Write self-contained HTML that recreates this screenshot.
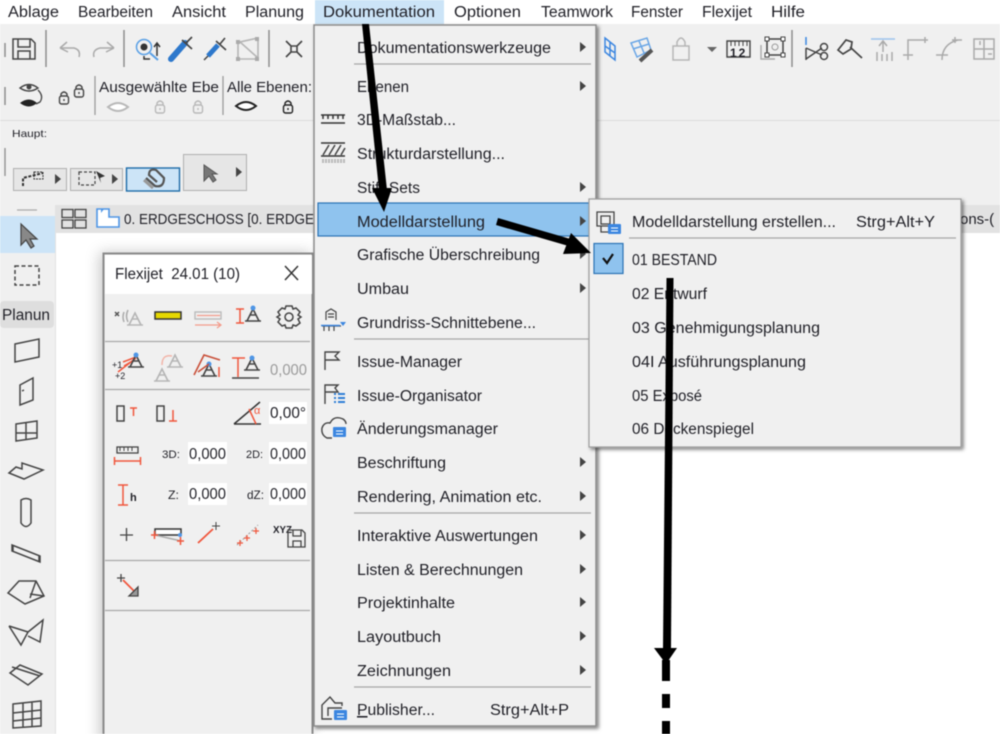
<!DOCTYPE html>
<html><head><meta charset="utf-8"><style>
html,body{margin:0;padding:0;background:#fff;width:1000px;height:734px;overflow:hidden}
svg{display:block;filter:blur(.4px)}
text{font-family:"Liberation Sans",sans-serif;font-size:15.5px;fill:#1f1f26}
.s{fill:none;stroke:#444;stroke-width:1.5}
.g{fill:none;stroke:#aaa;stroke-width:1.5}
.r{fill:none;stroke:#f0563c;stroke-width:1.5}
.b{fill:none;stroke:#2f7fd6;stroke-width:1.5}
</style></head><body>
<svg width="1000" height="734" viewBox="0 0 1000 734" xmlns="http://www.w3.org/2000/svg">
<defs>
<filter id="sh" x="-10%" y="-10%" width="120%" height="120%"><feDropShadow dx="2" dy="2" stdDeviation="1.800" flood-color="#000" flood-opacity=".5"/></filter>
<filter id="sh2" x="-20%" y="-10%" width="140%" height="120%"><feDropShadow dx="-3" dy="0" stdDeviation="7" flood-color="#000" flood-opacity=".22"/></filter>
<g id="tri"><path d="M-6 12L0 0L6 12M-8 12H8M-3 6H3" fill="none" stroke="#444" stroke-width="1.6"/></g>
<g id="trg"><path d="M-6 12L0 0L6 12M-8 12H8M-3 6H3" fill="none" stroke="#b5b5b5" stroke-width="1.6"/></g>
<path id="ch" d="M0 -5L6 0L0 5Z" fill="#444"/>
<g id="eye"><path d="M-10 0Q0 -8 10 0Q0 8 -10 0Z" fill="#fff" stroke="currentColor" stroke-width="2"/></g>
<g id="lock"><rect x="-4.500" y="-2" width="9" height="8" rx="2" fill="none" stroke="currentColor" stroke-width="1.4"/><path d="M-3 -2V-4Q0 -8 3 -4V-2M0 1V3" fill="none" stroke="currentColor" stroke-width="1.4"/></g>
<g id="fl"><rect x="0" y="0" width="13" height="10" rx="1" fill="#3b86e0"/><path d="M3 4H10M3 7H10" stroke="#fff"/></g>
</defs>

<!-- base -->
<rect width="1000" height="734" fill="#fff"/>
<rect y="24" width="1000" height="181" fill="#f0f0f0"/>
<rect y="120" width="1000" height="1" fill="#dcdcdc"/>
<rect x="55" y="205" width="945" height="28" fill="#e2e2e2"/>
<rect x="0" y="205" width="55" height="529" fill="#f0f0f0"/>
<rect x="55" y="205" width="1" height="529" fill="#e2e2e2"/>

<!-- menu bar -->
<rect x="315" y="0" width="129" height="24" fill="#cce4f7"/>
<text x="8" y="17" textLength="51" lengthAdjust="spacingAndGlyphs">Ablage</text>
<text x="78" y="17" textLength="75" lengthAdjust="spacingAndGlyphs">Bearbeiten</text>
<text x="172" y="17" textLength="54" lengthAdjust="spacingAndGlyphs">Ansicht</text>
<text x="245" y="17" textLength="59" lengthAdjust="spacingAndGlyphs">Planung</text>
<text x="323" y="17" textLength="112" lengthAdjust="spacingAndGlyphs">Dokumentation</text>
<text x="454" y="17" textLength="67" lengthAdjust="spacingAndGlyphs">Optionen</text>
<text x="541" y="17" textLength="72" lengthAdjust="spacingAndGlyphs">Teamwork</text>
<text x="631" y="17" textLength="52" lengthAdjust="spacingAndGlyphs">Fenster</text>
<text x="702" y="17" textLength="50" lengthAdjust="spacingAndGlyphs">Flexijet</text>
<text x="771" y="17" textLength="34" lengthAdjust="spacingAndGlyphs">Hilfe</text>

<!-- toolbar row 1 -->
<path d="M5 43V57M46 30V67M124 30V67M269 30V67M792 30V67M5 87V105" stroke="#8c8c8c" stroke-width="1.5"/>
<path class="s" d="M13 39H31L35 43V59H13ZM18 39V47H30V39M18 59V51H30V59"/>
<path class="g" d="M60 48L67 42M60 48L68 52M60 48H74Q81 50 79 57"/>
<path class="g" d="M114 48L107 42M114 48L106 52M114 48H100Q92 50 94 57"/>
<circle cx="144" cy="47" r="7.5" fill="none" stroke="#5aa0e6" stroke-width="1.5"/><circle cx="144" cy="47" r="3.5" fill="#333"/>
<path d="M150 53L158 60" stroke="#5aa0e6" stroke-width="2"/><path d="M157 56V44M154 47L157 43L160 47M144 56V59H150" stroke="#333" stroke-width="1.5" fill="none"/>
<path d="M171 59L185 43" stroke="#2d78cc" stroke-width="6" stroke-linecap="round"/><path d="M182 40L192 49M186 43L192 37" stroke="#444" stroke-width="1.7"/>
<path d="M204 60L210 54" stroke="#444" stroke-width="1.5"/><path d="M208 56L218 45" stroke="#2d78cc" stroke-width="5"/><path d="M216 41L226 50M220 44L225 38" stroke="#444" stroke-width="1.6"/>
<path d="M238 42V59H258V38L240 42L258 58" fill="none" stroke="#b5b5b5" stroke-width="1.6"/><rect x="236" y="40" width="4" height="4" fill="#aaa"/><rect x="255" y="37" width="4" height="4" fill="#aaa"/><rect x="255" y="57" width="4" height="4" fill="#aaa"/><rect x="236" y="57" width="4" height="4" fill="#aaa"/>
<path d="M286 41L291 46M302 41L297 46M286 57L291 52M302 57L297 52M291 46H297V52H291Z" fill="none" stroke="#444" stroke-width="1.6"/>

<!-- right toolbar -->
<path d="M605 38L615 46V60L605 52Z M610 42V56M605 46L615 53" fill="none" stroke="#3b86e0" stroke-width="1.5"/>
<path d="M631 43L647 38L651 50L637 57Z M639 41L644 53M633 49L649 44" fill="none" stroke="#6aa6e6" stroke-width="1.5"/><path d="M640 61L652 50" stroke="#555" stroke-width="4"/>
<path d="M673 60V46H689V60Z M677 46V42Q681 34 685 42V46" fill="none" stroke="#b5b5b5" stroke-width="1.5"/>
<path d="M707 47H717L712 52Z" fill="#666"/>
<path d="M727 41H750V57H727Z" fill="none" stroke="#444" stroke-width="1.4"/><path d="M731 41V46M735 41V46M739 41V46M743 41V46M747 41V46" stroke="#444"/>
<text x="730" y="57" style="font-size:12px;font-weight:bold;letter-spacing:2px">12</text>
<path d="M767 39H783V55H767Z" fill="none" stroke="#444" stroke-width="1.5"/><path d="M761 45V59H775" fill="none" stroke="#aaa" stroke-width="1.4"/><circle cx="775" cy="47" r="3" fill="none" stroke="#999"/><rect x="765" y="37" width="4" height="4" fill="#fff" stroke="#444"/><rect x="781" y="37" width="4" height="4" fill="#fff" stroke="#444"/><rect x="765" y="53" width="4" height="4" fill="#fff" stroke="#444"/><rect x="781" y="53" width="4" height="4" fill="#fff" stroke="#444"/>
<path d="M806 37V45" stroke="#3b86e0" stroke-width="1.5"/><path d="M806 48V60M806 48L822 55M806 59L822 48" class="s"/><circle cx="824" cy="47" r="3.5" class="s"/><circle cx="824" cy="56" r="3.5" class="s"/>
<path d="M838 50L846 40L852 42L851 49L843 54ZM850 47L862 58" fill="none" stroke="#444" stroke-width="1.7"/>
<path d="M871 39H895" stroke="#9cc4ee" stroke-width="1.5"/><path d="M883 42V52M879 46L883 41L887 46M877 52V61M882 54V61M887 54V61M892 52V61" class="g"/>
<path d="M908 60V40H928M903 55H913M925 37V43" class="g"/>
<path d="M942 60Q942 44 958 40M936 55H948M955 37V43M952 40H962" class="g"/>
<path d="M974 39H994V59H974ZM974 49H994M984 39V59M980 45V41M988 54H992" class="g"/>

<!-- row 2 -->
<path d="M95 76V115M223 76V115" stroke="#9c9c9c" stroke-width="1.3"/>
<path d="M20 88Q29 81 38 88Q29 94 20 88Z" fill="none" stroke="#444" stroke-width="1.4"/><circle cx="29" cy="87" r="2.5" fill="#444"/>
<path d="M20 103Q29 96 37 103Q29 110 20 103Z" fill="#222"/><path d="M38 90Q44 96 40 102L36 104" fill="none" stroke="#444" stroke-width="1.3"/>
<g color="#444"><use href="#lock" x="64" y="98"/><use href="#lock" x="79" y="91"/></g>
<text x="99" y="92" textLength="120" lengthAdjust="spacingAndGlyphs" style="font-size:14.5px">Ausgewählte Ebe</text>
<text x="227" y="92" textLength="85" lengthAdjust="spacingAndGlyphs" style="font-size:14.5px">Alle Ebenen:</text>
<g color="#b8b8b8"><use href="#eye" x="118" y="107"/><use href="#lock" x="160" y="107"/><use href="#lock" x="198" y="107"/></g>
<g color="#222"><use href="#eye" x="246" y="106"/><use href="#lock" x="288" y="107"/></g>

<!-- Haupt -->
<text x="12" y="137" textLength="35" lengthAdjust="spacingAndGlyphs" style="font-size:10.5px">Haupt:</text>
<path d="M5 148V176" stroke="#8c8c8c" stroke-width="1.3"/>
<rect x="13.5" y="168.5" width="53" height="22" fill="#e6e6e6" stroke="#b0b0b0"/>
<rect x="70.5" y="168.5" width="52" height="22" fill="#e6e6e6" stroke="#b0b0b0"/>
<rect x="126.5" y="168" width="53" height="23" fill="#cce4f7" stroke="#1d6ba8" stroke-width="1.4"/>
<rect x="183.5" y="154.5" width="63" height="36" fill="#e6e6e6" stroke="#b0b0b0"/>
<path d="M23 186V178L43 173" stroke="#333" stroke-width="2" stroke-dasharray="3 1.5" fill="none"/><rect x="34" y="172" width="9" height="7" fill="none" stroke="#333" stroke-dasharray="2 1"/>
<use href="#ch" x="55" y="179"/><use href="#ch" x="112" y="179"/><use href="#ch" x="236" y="172"/>
<rect x="79" y="172" width="16" height="13" fill="none" stroke="#444" stroke-width="1.2" stroke-dasharray="3 2"/><path d="M96 171L105 176L100 178L101 183Z" fill="#333"/>
<path d="M146 178L155 186Q164 188 164 178L156 170Q149 168 149 175L157 182" fill="none" stroke="#555" stroke-width="2.2"/><path d="M144 180L153 188" stroke="#999" stroke-width="3"/>
<path d="M204 165V181L209 176L213 182L216 180L212 174H217Z" fill="#777" stroke="#555"/>

<!-- tab bar -->
<path d="M17 210H37" stroke="#aaa" stroke-width="1.2"/>
<rect x="62" y="209.500" width="11" height="8" fill="none" stroke="#444" stroke-width="1.3"/><rect x="75" y="209.500" width="11" height="8" fill="none" stroke="#444" stroke-width="1.3"/><rect x="62" y="220" width="11" height="8" fill="none" stroke="#444" stroke-width="1.3"/><rect x="75" y="220" width="11" height="8" fill="none" stroke="#444" stroke-width="1.3"/>
<path d="M97 209H109V217H119V227H97Z" fill="#fff" stroke="#4f96e6" stroke-width="1.6"/><path d="M101 209V213L104 209" fill="#4f96e6"/>
<text x="124" y="224" textLength="190" lengthAdjust="spacingAndGlyphs" style="font-size:15px">0. ERDGESCHOSS [0. ERDGE</text>
<text x="960" y="224" style="font-size:15px">ons-(</text>

<!-- left toolbox -->
<rect x="0" y="216" width="55" height="37" fill="#cce4f7"/>
<path d="M21 224V245L26 240L31 248L34 246L30 239H37Z" fill="#888" stroke="#444" stroke-width="1.2"/>
<rect x="15" y="266" width="24" height="19" fill="none" stroke="#444" stroke-width="1.5" stroke-dasharray="4 2.500"/>
<rect x="0" y="301" width="54" height="27" rx="4" fill="#dedede"/>
<text x="2" y="320" textLength="48" lengthAdjust="spacingAndGlyphs">Planun</text>
<g fill="none" stroke="#444" stroke-width="1.5">
<path d="M15 344L39 339V357L15 362Z"/>
<path d="M20 385L33 378V400L20 405ZM24 390L22 391"/>
<path d="M16 424L37 421V438L16 441ZM26 422V440M16 433H37"/>
<path d="M9 473L16 467L22 469V463L43 470L24 479Z"/>
<path d="M21 500Q26 497 31 500V523Q26 530 21 523Z"/>
<path d="M12 545L40 556V562L12 551Z M13 545V551M39 556V562"/>
<path d="M8 593L19 581H36L44 596L25 604Z M36 581L30 598M44 596L30 594"/>
<path d="M9 626L21 645L28 632L43 620L40 642L28 636M9 626L28 632"/>
<path d="M10 673L20 665L42 674L28 685ZM12 667L40 676"/>
<path d="M13 704L41 701V726L13 728ZM13 713L41 710M13 721L41 718M23 703V727M32 702V726"/>
</g>

<!-- Flexijet panel -->
<g filter="url(#sh2)">
<rect x="103.500" y="253.500" width="209" height="490" fill="#f0f0f0" stroke="#8a8a8a" stroke-width="2"/>
</g>
<rect x="105" y="255" width="207" height="39" fill="#fff"/>
<text x="115" y="279" textLength="125" lengthAdjust="spacingAndGlyphs">Flexijet&#160; 24.01 (10)</text>
<path d="M285 266L298 280M298 266L285 280" stroke="#333" stroke-width="1.5"/>
<path d="M105 341.500H310M105 389.500H310M105 560.500H310M105 610.500H310" stroke="#a8a8a8" stroke-width="1.3"/>
<!-- row1 -->
<path d="M115 312L119 316M119 312L115 316" stroke="#555" stroke-width="1.5"/><use href="#trg" x="135" y="313"/><path d="M124 312Q122 317 124 322M128 310Q125 316 128 322" class="g"/>
<rect x="155" y="312" width="26" height="7" fill="#e6d800" stroke="#333" stroke-width="1.5"/>
<rect x="195" y="312" width="26" height="7" fill="none" stroke="#bbb" stroke-width="1.4"/><path d="M197 315.500H220M195 325H221M217 322L221 325L217 328" fill="none" stroke="#f39a8a" stroke-width="1.2"/>
<path d="M240 309V323M236 309H244M236 323H244" class="r"/><use href="#tri" x="253" y="309"/><circle cx="253" cy="308" r="2.500" fill="#4f96e6"/>
<g fill="none" stroke="#444" stroke-width="1.5"><circle cx="289" cy="317" r="4"/><path d="M286 306H292L293 309L296 308L300 312L298 315L301 317L298 319L300 323L296 326L293 325L292 328H286L285 325L282 326L278 322L280 319L277 317L280 315L278 312L282 308L285 309Z"/></g>
<!-- row2 -->
<path d="M123 362L136 357M124 366L134 360M118 372L136 358" class="r"/><use href="#tri" x="136" y="355"/><circle cx="136" cy="355" r="2.500" fill="#4f96e6"/>
<text x="112" y="368" style="font-size:9px">+1</text><text x="115" y="379" style="font-size:9px">+2</text>
<use href="#trg" x="175" y="355"/><use href="#trg" x="162" y="369"/><path d="M162 365Q162 354 172 356" fill="none" stroke="#f2b4a8" stroke-width="1.500"/>
<use href="#tri" x="209" y="364"/><circle cx="209" cy="364" r="2.500" fill="#4f96e6"/><path d="M194 375L204 355L220 360M198 372L209 364" fill="none" stroke="#c9503a" stroke-width="1.6"/><path d="M219 367V377" class="r"/>
<use href="#tri" x="252" y="358"/><circle cx="252" cy="358" r="2.500" fill="#4f96e6"/><path d="M232 378H259" stroke="#444" stroke-width="1.5"/><path d="M232 358H245M238 358V377" class="r"/>
<text x="270" y="375" textLength="37" lengthAdjust="spacingAndGlyphs" style="fill:#9a9a9a">0,000</text>
<!-- row3 -->
<rect x="117" y="406" width="7" height="15" fill="none" stroke="#444" stroke-width="1.5"/><path d="M130 408H137M133.500 408V416" class="r"/>
<rect x="157" y="406" width="7" height="15" fill="none" stroke="#444" stroke-width="1.500"/><path d="M173 410V421M169 421H177" class="r"/>
<path d="M234 424L260 402M234 424H261" stroke="#333" stroke-width="1.500" fill="none"/><path d="M249 409L256 424" class="r"/><text x="254" y="414" style="font-size:11px;fill:#f0563c">α</text>
<rect x="269" y="402" width="38" height="22" fill="#fff"/><text x="270" y="418" textLength="36" lengthAdjust="spacingAndGlyphs">0,00°</text>
<!-- row4 -->
<rect x="117" y="447" width="21" height="6" fill="none" stroke="#444" stroke-width="1.300"/><path d="M120 447V451M124 447V451M128 447V451M132 447V451" stroke="#444"/>
<path d="M114.500 457V465M140.500 457V465M115 461H140" class="r"/>
<text x="162" y="458" textLength="18" lengthAdjust="spacingAndGlyphs" style="font-size:11px">3D:</text>
<rect x="188" y="442" width="39" height="22" fill="#fff"/><text x="189" y="459" textLength="37" lengthAdjust="spacingAndGlyphs">0,000</text>
<text x="246" y="458" textLength="17" lengthAdjust="spacingAndGlyphs" style="font-size:11px">2D:</text>
<rect x="269" y="442" width="38" height="22" fill="#fff"/><text x="270" y="459" textLength="36" lengthAdjust="spacingAndGlyphs">0,000</text>
<!-- row5 -->
<path d="M118 485H128M123 485V505M118 505H128" class="r"/>
<text x="130" y="501" style="font-size:11px;font-weight:bold">h</text>
<text x="168" y="499" textLength="11" lengthAdjust="spacingAndGlyphs" style="font-size:12px">Z:</text>
<rect x="188" y="483" width="39" height="22" fill="#fff"/><text x="189" y="499" textLength="37" lengthAdjust="spacingAndGlyphs">0,000</text>
<text x="247" y="499" textLength="17" lengthAdjust="spacingAndGlyphs" style="font-size:12px">dZ:</text>
<rect x="269" y="483" width="38" height="22" fill="#fff"/><text x="270" y="499" textLength="36" lengthAdjust="spacingAndGlyphs">0,000</text>
<!-- row6 -->
<path d="M120 535H133M126.500 528V541" stroke="#444" stroke-width="1.300"/>
<rect x="155" y="529" width="26" height="6" fill="#fff" stroke="#333" stroke-width="1.500"/>
<path d="M155 535L181 541" stroke="#aaa" stroke-width="1.500"/><path d="M151 535H158M154.500 531V539M177 541H184M180.500 537V545" class="r"/><circle cx="180" cy="535" r="2" fill="#4f96e6"/>
<path d="M198 543L213 529" stroke="#f0563c" stroke-width="1.800"/><path d="M212 526H220M216 522V530" stroke="#444"/>
<path d="M237 545L258 525" stroke="#999" stroke-dasharray="2 2"/><path d="M237 543H243M240 540V546M244 538H250M247 535V541M253 531H259M256 528V534" stroke="#f0563c" stroke-width="1.200"/>
<text x="273" y="533" textLength="19" lengthAdjust="spacingAndGlyphs" style="font-size:10px;font-weight:bold">XYZ</text>
<path d="M288 530H302L305 533V547H288ZM293 530V536H301V530M293 547V541H301V547" fill="none" stroke="#444" stroke-width="1.300"/>
<!-- row7 -->
<path d="M117 578H125M121 574V582" stroke="#444" stroke-width="1.300"/><path d="M123 580L136 593" stroke="#f0563c" stroke-width="1.800"/><path d="M129 596H138V587Z" fill="#999" stroke="#444" stroke-width="1.300"/>

<!-- main menu -->
<g filter="url(#sh)"><rect x="314" y="25" width="282" height="701" fill="#f0f0f0" stroke="#8c8c8c" stroke-width="1.500"/></g>
<rect x="318" y="203" width="272" height="33" fill="#8fc3ee" stroke="#2a72b5" stroke-width="1.200"/>
<path d="M354 64H591M354 339H591M354 513H591M354 687H591" stroke="#a6a6a6" stroke-width="1.200"/>
<g>
<text x="357" y="53" textLength="194" lengthAdjust="spacingAndGlyphs">Dokumentationswerkzeuge</text>
<text x="357" y="92" textLength="52" lengthAdjust="spacingAndGlyphs">Ebenen</text>
<text x="357" y="125" textLength="99" lengthAdjust="spacingAndGlyphs">3D-Maßstab...</text>
<text x="357" y="159" textLength="148" lengthAdjust="spacingAndGlyphs">Strukturdarstellung...</text>
<text x="357" y="193" textLength="63" lengthAdjust="spacingAndGlyphs">Stift-Sets</text>
<text x="357" y="227" textLength="128" lengthAdjust="spacingAndGlyphs">Modelldarstellung</text>
<text x="357" y="260" textLength="183" lengthAdjust="spacingAndGlyphs">Grafische Überschreibung</text>
<text x="357" y="294" textLength="52" lengthAdjust="spacingAndGlyphs">Umbau</text>
<text x="357" y="328" textLength="179" lengthAdjust="spacingAndGlyphs">Grundriss-Schnittebene...</text>
<text x="357" y="367" textLength="105" lengthAdjust="spacingAndGlyphs">Issue-Manager</text>
<text x="357" y="401" textLength="125" lengthAdjust="spacingAndGlyphs">Issue-Organisator</text>
<text x="357" y="434" textLength="141" lengthAdjust="spacingAndGlyphs">Änderungsmanager</text>
<text x="357" y="468" textLength="89" lengthAdjust="spacingAndGlyphs">Beschriftung</text>
<text x="357" y="502" textLength="185" lengthAdjust="spacingAndGlyphs">Rendering, Animation etc.</text>
<text x="357" y="541" textLength="181" lengthAdjust="spacingAndGlyphs">Interaktive Auswertungen</text>
<text x="357" y="575" textLength="166" lengthAdjust="spacingAndGlyphs">Listen &amp; Berechnungen</text>
<text x="357" y="608" textLength="98" lengthAdjust="spacingAndGlyphs">Projektinhalte</text>
<text x="357" y="642" textLength="84" lengthAdjust="spacingAndGlyphs">Layoutbuch</text>
<text x="357" y="676" textLength="94" lengthAdjust="spacingAndGlyphs">Zeichnungen</text>
<text x="357" y="715" textLength="78" lengthAdjust="spacingAndGlyphs"><tspan text-decoration="underline">P</tspan>ublisher...</text>
<text x="490" y="715" textLength="79" lengthAdjust="spacingAndGlyphs">Strg+Alt+P</text>
</g>
<g>
<use href="#ch" x="580" y="47"/><use href="#ch" x="580" y="86"/><use href="#ch" x="580" y="187"/><use href="#ch" x="580" y="221"/><use href="#ch" x="580" y="254"/><use href="#ch" x="580" y="288"/><use href="#ch" x="580" y="462"/><use href="#ch" x="580" y="496"/><use href="#ch" x="580" y="535"/><use href="#ch" x="580" y="569"/><use href="#ch" x="580" y="602"/><use href="#ch" x="580" y="636"/><use href="#ch" x="580" y="670"/>
</g>
<!-- menu icons -->
<path d="M321 115H345M321 123H345M323 115V119M328 115V119M333 115V119M338 115V119M343 115V119" stroke="#333" stroke-width="1.500"/>
<path d="M321 143H345M321 156H345" stroke="#333" stroke-width="1.500"/><path d="M323 155L329 145M329 155L335 145M335 155L341 145M341 155L345 148" stroke="#444" stroke-width="1.500"/><path d="M322 160H345M322 162H345" stroke="#aaa" stroke-width="1.500" stroke-dasharray="2 1"/>
<path d="M326 320V312L331 309L336 312V320M328 314H334M328 317H334M322 326H341M324 326V331M329 326V331M334 326V331" fill="none" stroke="#444" stroke-width="1.200"/><path d="M321 325.500H340" stroke="#3b86e0" stroke-width="1.500"/><path d="M340 322H346L343 326Z" fill="#3b86e0"/>
<path d="M325 370V352H339L335 356L339 360H325" fill="none" stroke="#444" stroke-width="1.400"/>
<path d="M325 404V385H338L335 388L338 392H325" fill="none" stroke="#444" stroke-width="1.400"/><path d="M334 394H336M338 394H345M334 398H336M338 398H345M334 402H336M338 402H345" stroke="#2f7fd6" stroke-width="2"/>
<path d="M332 438H327Q321 435 322 428Q324 422 330 423Q334 415 343 419Q346 421 346 424" fill="none" stroke="#444" stroke-width="1.400"/><use href="#fl" x="333" y="427"/>
<path d="M332 719H322V705L330 697L335 703H342V706M328 716V708H342" fill="none" stroke="#444" stroke-width="1.400"/><use href="#fl" x="334" y="710"/>

<!-- submenu -->
<g filter="url(#sh)"><rect x="589" y="199" width="372" height="248" fill="#f0f0f0" stroke="#9c9c9c" stroke-width="1.200"/></g>
<path d="M629 238H956" stroke="#a6a6a6" stroke-width="1.200"/>
<rect x="594" y="243.500" width="29" height="30" fill="#8fc3ee" stroke="#2a72b5" stroke-width="1.200"/>
<path d="M603 258L607 263L613 254" fill="none" stroke="#111" stroke-width="2.200"/>
<path d="M597 212H614V226H597ZM601 216H610V224H601ZM601 226V232H612" fill="none" stroke="#444" stroke-width="1.300"/><use href="#fl" x="608" y="224"/>
<text x="632" y="227" textLength="204" lengthAdjust="spacingAndGlyphs">Modelldarstellung erstellen...</text>
<text x="856" y="227" textLength="79" lengthAdjust="spacingAndGlyphs">Strg+Alt+Y</text>
<text x="632" y="265" textLength="85" lengthAdjust="spacingAndGlyphs">01 BESTAND</text>
<text x="632" y="299" textLength="75" lengthAdjust="spacingAndGlyphs">02 Entwurf</text>
<text x="632" y="333" textLength="188" lengthAdjust="spacingAndGlyphs">03 Genehmigungsplanung</text>
<text x="632" y="367" textLength="174" lengthAdjust="spacingAndGlyphs">04I Ausführungsplanung</text>
<text x="632" y="401" textLength="70" lengthAdjust="spacingAndGlyphs">05 Exposé</text>
<text x="632" y="434" textLength="122" lengthAdjust="spacingAndGlyphs">06 Deckenspiegel</text>

<!-- black annotation arrows -->
<path d="M362 24H369L387 190H379Z" fill="#000"/>
<path d="M372 188H392L384 212Z" fill="#000"/>
<path d="M498 218L496 225L572 247L574 240Z" fill="#000"/>
<path d="M571 233L563 254L591 253Z" fill="#000"/>
<path d="M666.500 278H673.500L671 648H663Z" fill="#000"/>
<path d="M654 648H677L666 664Z" fill="#000"/>
<rect x="662" y="660" width="8" height="21" fill="#000"/>
<rect x="662" y="694" width="8" height="14" fill="#000"/>
<rect x="662" y="721" width="8" height="13" fill="#000"/>
</svg>
</body></html>
